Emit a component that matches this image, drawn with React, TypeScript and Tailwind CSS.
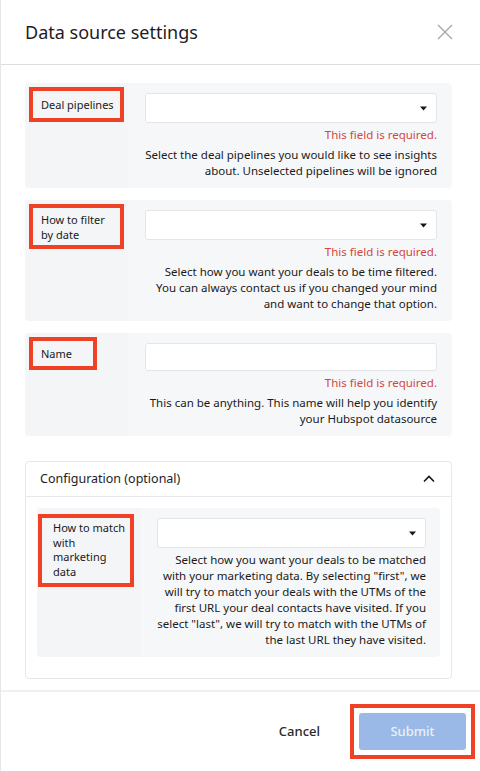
import type { ReactNode } from "react";

function Caret() {
  return (
    <svg width="7" height="5" viewBox="0 0 7 5" className="text-neutral-900">
      <path d="M0 0.5h7L3.5 4.5z" fill="currentColor" />
    </svg>
  );
}

interface FieldCardProps {
  label: ReactNode;
  labelClass: string;
  select?: boolean;
  children: ReactNode;
}

function FieldCard({ label, labelClass, select = true, children }: FieldCardProps) {
  return (
    <div className="flex rounded bg-[#f6f7f9]">
      <div className="w-[105px] shrink-0 rounded-l border-r border-[#f8f9fa] bg-[#f4f5f7] pl-[4px] pt-[4px]">
        <div
          className={`whitespace-nowrap border-4 border-[#ee4126] bg-[#f4f5f7] px-[8px] text-[11px] leading-[15px] text-[#1a1a1a] ${labelClass}`}
        >
          {label}
        </div>
      </div>
      <div className="flex-1 px-[15px] pt-[10px] pb-[9px]">
        <div
          className={`flex items-center justify-end rounded-[3px] border border-[#e3e5e8] bg-white pr-[9px] ${select ? "h-[30px]" : "h-[28px]"}`}
        >
          {select && <Caret />}
        </div>
        <p className="mt-[4px] text-right text-[11.5px] leading-[16px] text-[#d2473f]">This field is required.</p>
        <p className="mt-[4px] text-right text-[11.5px] leading-[16px] text-[#1a1a1a]">{children}</p>
      </div>
    </div>
  );
}

export default function App() {
  return (
    <div className="flex h-[771px] w-[480px] flex-col overflow-hidden rounded-br-lg border-l border-[#e5e7eb] bg-white font-['Noto_Sans',sans-serif] text-[#1a1a1a]">
      {/* Header */}
      <div className="flex h-[65px] shrink-0 items-center justify-between border-b border-[#dcdee2] pl-[24px] pr-[27px]">
        <h1 className="text-[18px] font-normal text-[#1d1d1f]">Data source settings</h1>
        <svg width="16" height="16" viewBox="0 0 16 16" className="text-[#a8a8a8]">
          <path d="M1 1l14 14M15 1L1 15" stroke="currentColor" strokeWidth="1.4" />
        </svg>
      </div>

      {/* Body */}
      <div className="flex flex-1 flex-col pl-[24px] pr-[28px] pt-[18px]">
        <div className="flex flex-col gap-[12px]">
          <FieldCard label="Deal pipelines" labelClass="w-[95px] pt-[6px] pb-[6px]">
            Select the deal pipelines you would like to see insights about. Unselected pipelines will be ignored
          </FieldCard>
          <FieldCard
            label={
              <>
                How to filter
                <br />
                by date
              </>
            }
            labelClass="w-[95px] pt-[4px] pb-[3px]"
          >
            Select how you want your deals to be time filtered. You can always contact us if you changed your mind and
            want to change that option.
          </FieldCard>
          <FieldCard label="Name" labelClass="w-[68px] pt-[5px] pb-[5px]" select={false}>
            This can be anything. This name will help you identify your Hubspot datasource
          </FieldCard>
        </div>

        {/* Configuration */}
        <div className="mt-[25px] rounded border border-[#e6e8eb]">
          <div className="flex h-[35px] items-center justify-between border-b border-[#e6e8eb] pl-[14px] pr-[16px]">
            <span className="text-[12.5px] text-[#1d1d1f]">Configuration (optional)</span>
            <svg width="12" height="8" viewBox="0 0 12 8" className="text-neutral-900">
              <path d="M1 6.5L6 1.5l5 5" fill="none" stroke="currentColor" strokeWidth="1.6" />
            </svg>
          </div>
          <div className="px-[11px] pt-[11px] pb-[21px]">
            <div className="flex rounded bg-[#f6f7f9]">
              <div className="w-[106px] shrink-0 rounded-l border-r border-[#f8f9fa] bg-[#f4f5f7] pl-[1px] pt-[6px]">
                <div className="w-[96px] whitespace-nowrap border-4 border-[#ee4126] bg-[#f4f5f7] pl-[11px] pt-[3px] pb-[3px] text-[11px] leading-[14.7px] text-[#1a1a1a]">
                  How to match
                  <br />
                  with
                  <br />
                  marketing
                  <br />
                  data
                </div>
              </div>
              <div className="flex-1 px-[14px] pt-[10px] pb-[9px]">
                <div className="flex h-[30px] items-center justify-end rounded-[3px] border border-[#e3e5e8] bg-white pr-[9px]">
                  <Caret />
                </div>
                <p className="mt-[4px] text-right text-[11.5px] leading-[16px] text-[#1a1a1a]">
                  Select how you want your deals to be matched with your marketing data. By selecting "first", we will
                  try to match your deals with the UTMs of the first URL your deal contacts have visited. If you select
                  "last", we will try to match with the UTMs of the last URL they have visited.
                </p>
              </div>
            </div>
          </div>
        </div>
      </div>

      {/* Footer */}
      <div className="flex h-[81px] shrink-0 items-center justify-end gap-[30px] border-t-2 border-[#eef0f2] pr-[5px]">
        <button className="text-[13px] font-medium text-[#2a2a2a]">Cancel</button>
        <div className="border-4 border-[#ee4126] p-[5px]">
          <button className="h-[37px] w-[107px] rounded-[3px] bg-[#9ab9e6] text-[13px] font-medium text-[#e9f0fa]">
            Submit
          </button>
        </div>
      </div>
    </div>
  );
}
